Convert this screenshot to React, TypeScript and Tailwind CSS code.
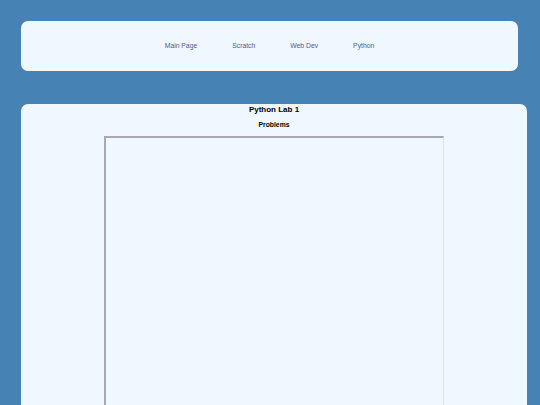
const links = ["Main Page", "Scratch", "Web Dev", "Python"];

export default function App() {
  return (
    <div className="h-screen overflow-hidden bg-[#4682b4] pt-[21px] font-['Liberation_Sans',Arial,sans-serif]">
      <nav className="ml-[21px] mr-[22px] flex h-[50px] items-center justify-center gap-[35px] rounded-[7px] bg-[#f0f8ff]">
        {links.map((l) => (
          <a key={l} className="text-[6.8px] leading-none text-[#4d5a92]">
            {l}
          </a>
        ))}
      </nav>

      <main className="ml-[21px] mr-[13px] mt-[33px] flex h-[301px] flex-col items-center overflow-hidden rounded-t-[7px] bg-[#f0f8ff] pt-[1px]">
        <h1 className="text-[8px] font-bold leading-[10px] text-black">Python Lab 1</h1>
        <h2 className="mt-[6px] text-[6.8px] font-bold leading-[8px] text-black">Problems</h2>
        <div className="mt-[6.5px] h-[300px] w-[340px] shrink-0 border-l-2 border-t-2 border-r border-b border-l-[#a8a9b2] border-t-[#a8a9b2] border-r-[#dde3ec] border-b-[#dde3ec] bg-[#f0f8ff]" />
      </main>
    </div>
  );
}
